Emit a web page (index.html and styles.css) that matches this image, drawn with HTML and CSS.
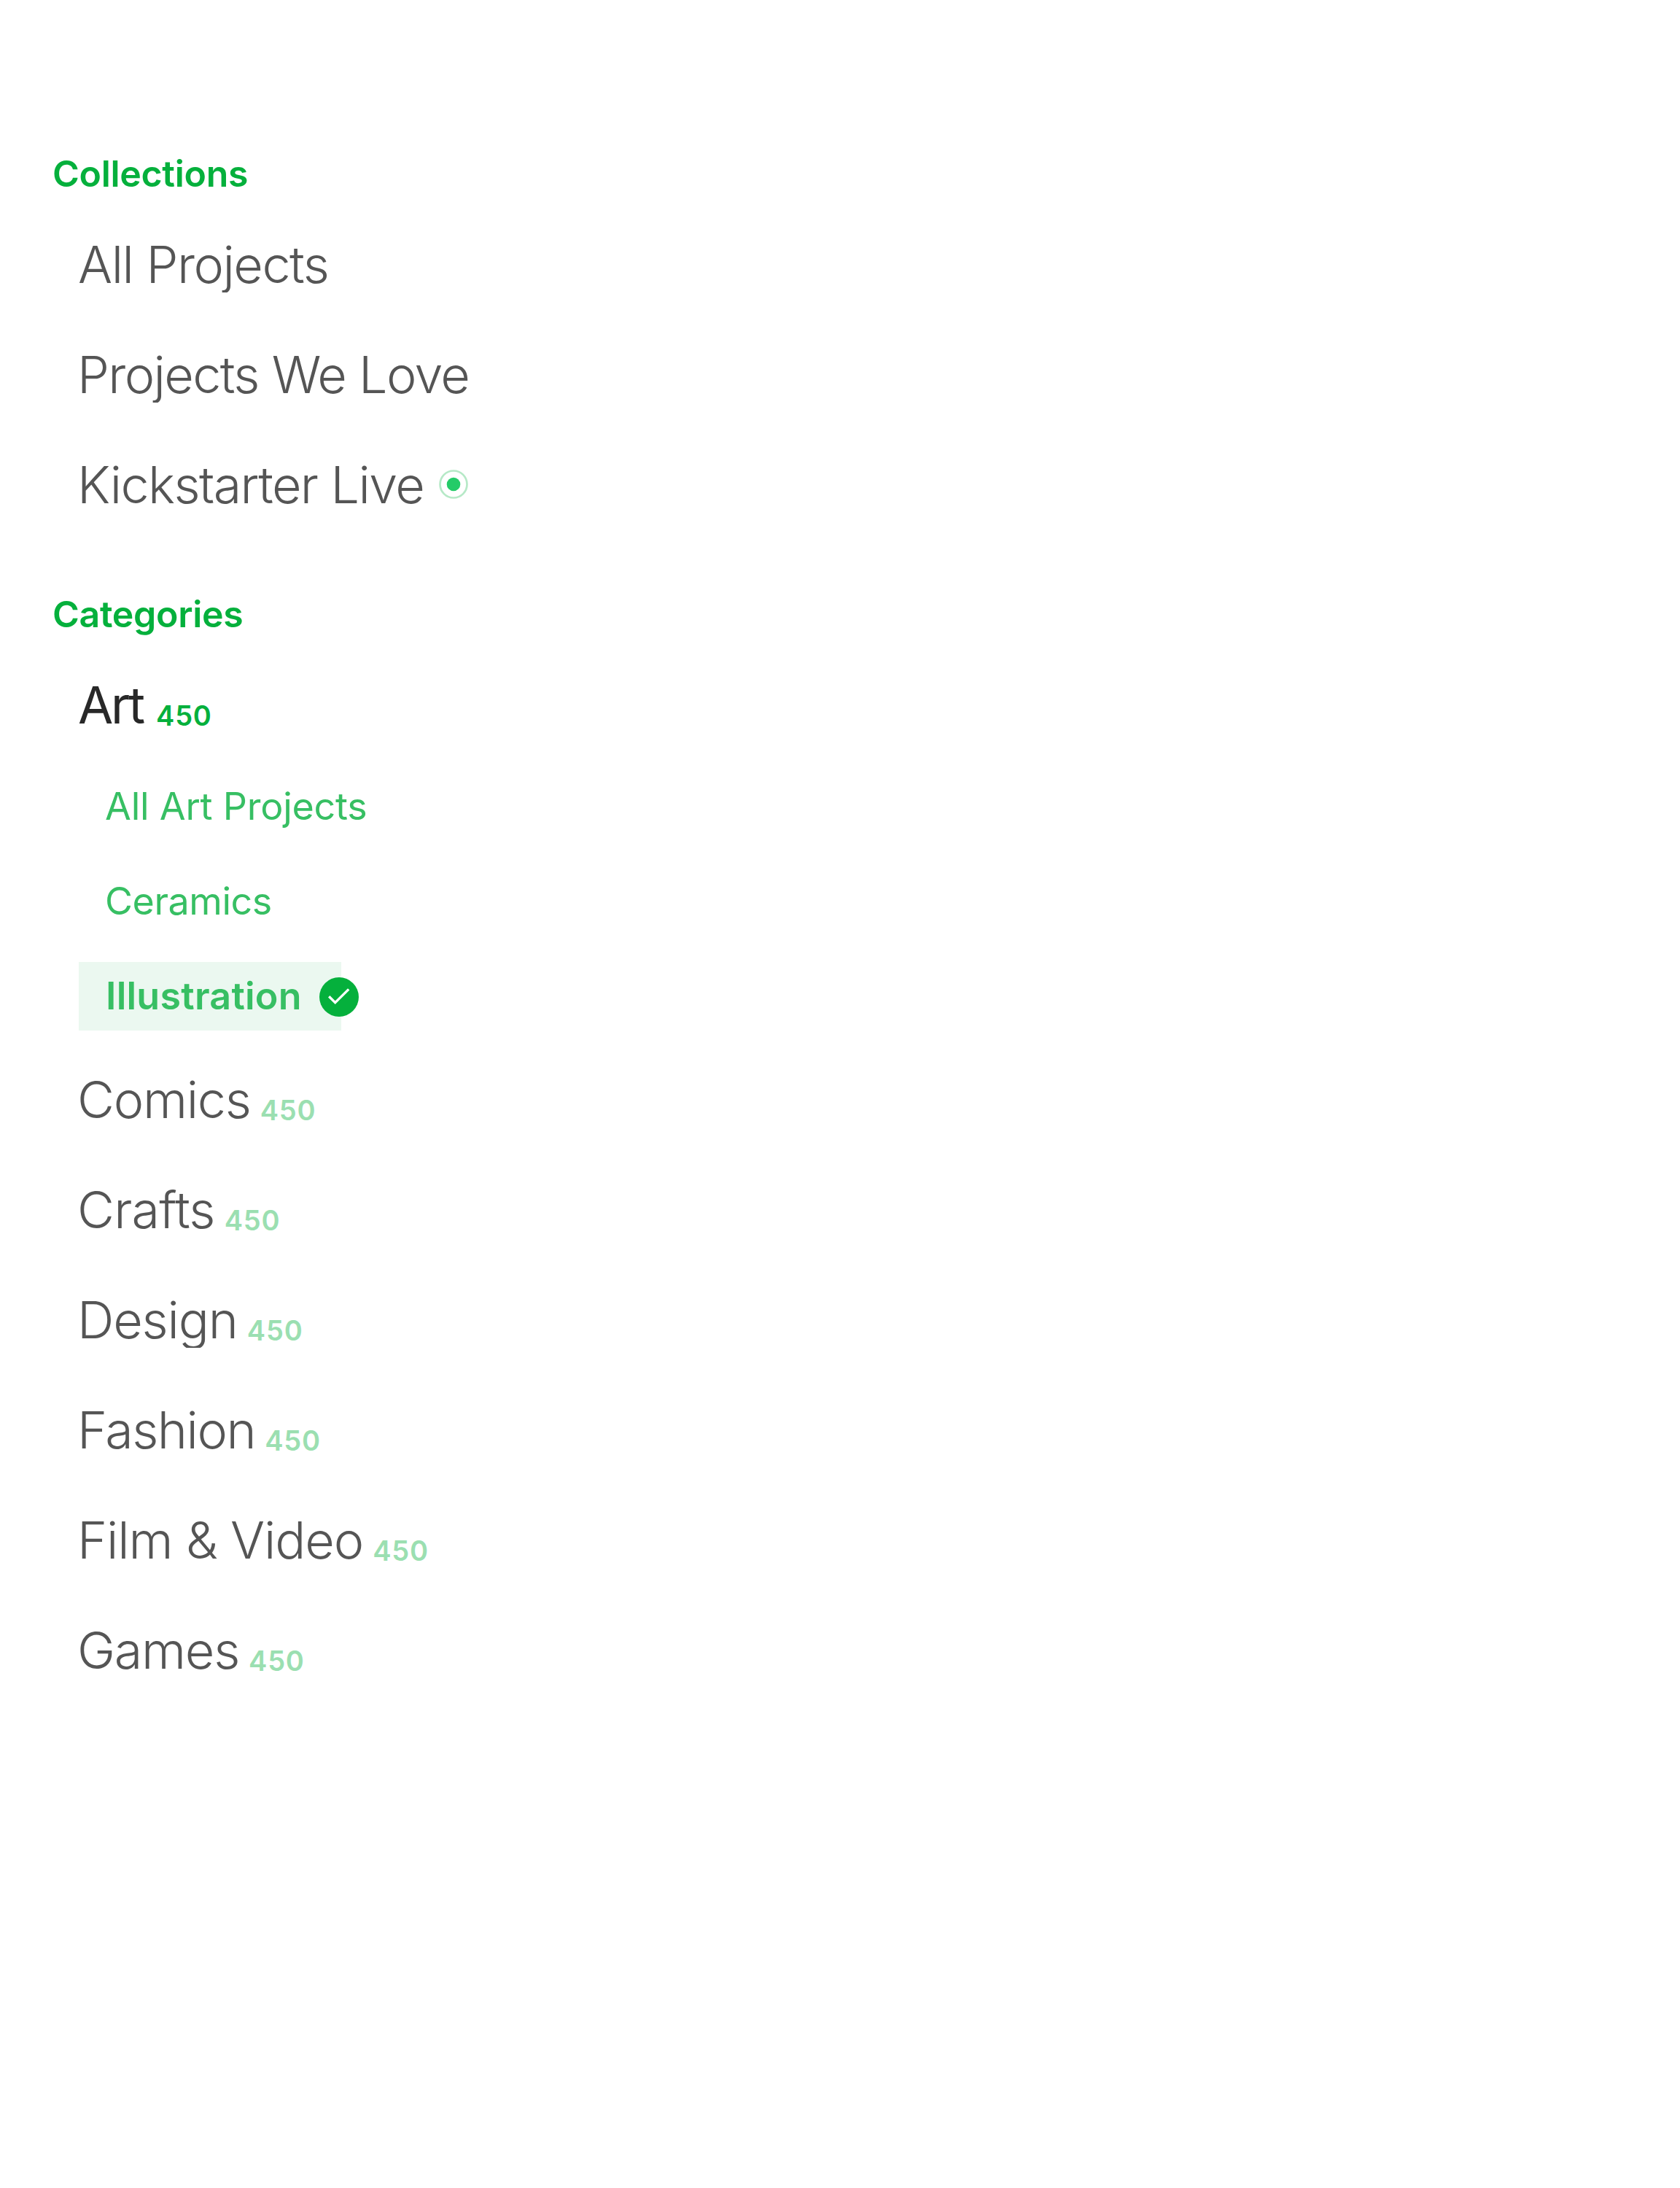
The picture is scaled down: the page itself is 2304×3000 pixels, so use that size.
FILE: index.html
```
<!DOCTYPE html>
<html lang="en">
<head>
<meta charset="utf-8">
<title>Discover filters</title>
<link rel="stylesheet" href="styles.css">
</head>
<body>
<nav class="filters">
  <section class="group">
    <h2 class="heading">Collections</h2>
    <ul class="list">
      <li class="row"><span class="label label--all">All Projects</span></li>
      <li class="row"><span class="label label--love">Projects We Love</span></li>
      <li class="row">
        <span class="label label--live">Kickstarter Live</span>
        <svg class="live" viewBox="0 0 40 40" aria-hidden="true">
          <circle cx="20" cy="20" r="18.5" fill="none" stroke="#b6e9c7" stroke-width="2.7"/>
          <circle cx="20" cy="20" r="9.3" fill="#25cb68"/>
        </svg>
      </li>
    </ul>
  </section>
  <section class="group">
    <h2 class="heading">Categories</h2>
    <ul class="list">
      <li class="row row--open"><span class="label label--art">Art</span><span class="count">450</span></li>
      <li>
        <ul class="sublist">
          <li class="subrow"><span class="sub sub--all">All Art Projects</span></li>
          <li class="subrow"><span class="sub sub--ceramics">Ceramics</span></li>
          <li class="subrow">
            <div class="selected">
              <span class="sub sub--active">Illustration</span>
              <svg class="check" viewBox="0 0 54 54" aria-hidden="true">
                <circle cx="27" cy="27" r="27" fill="#05b03c"/>
                <path d="M13.2 26.2 L21.7 34.6 L40.2 16.4" fill="none" stroke="#fff" stroke-width="3.4"/>
              </svg>
            </div>
          </li>
        </ul>
      </li>
      <li class="row"><span class="label label--comics">Comics</span><span class="count">450</span></li>
      <li class="row"><span class="label label--crafts">Crafts</span><span class="count">450</span></li>
      <li class="row"><span class="label label--design">Design</span><span class="count">450</span></li>
      <li class="row"><span class="label label--fashion">Fashion</span><span class="count">450</span></li>
      <li class="row"><span class="label label--film">Film &amp; Video</span><span class="count">450</span></li>
      <li class="row"><span class="label label--games">Games</span><span class="count">450</span></li>
    </ul>
  </section>
</nav>
</body>
</html>
```
FILE: styles.css
```
* { box-sizing: border-box; }

body {
  margin: 0;
  background: #fff;
  font-family: Inter, "Liberation Sans", sans-serif;
}

.filters {
  display: flex;
  flex-direction: column;
  gap: 62px;
  min-height: 3000px;
  padding-top: 198px;
}

ul {
  margin: 0;
  padding: 0;
  list-style: none;
}

.heading {
  margin: 0 0 9px;
  padding-left: 72px;
  font-size: 50px;
  font-weight: 600;
  line-height: 80px;
  letter-spacing: -0.3px;
  color: #05b03c;
}

.row {
  display: flex;
  align-items: flex-start;
  gap: 13px;
  height: 151px;
  padding: 33px 0 0 106px;
}

/* Labels are cut just under the baseline, trimming long descenders */
.label {
  font-size: 70px;
  font-weight: 310;
  line-height: 85px;
  white-space: nowrap;
  color: #555;
  clip-path: inset(0 -8px 4px -8px);
}

.label--all { margin-left: 1px; letter-spacing: -1.5px; }
.label--love { letter-spacing: -1.65px; }
.label--live { letter-spacing: -1.6px; }
.label--comics { letter-spacing: -1.25px; }
.label--crafts { letter-spacing: -0.8px; }
.label--design { letter-spacing: -1.15px; }
.label--fashion { letter-spacing: -1.45px; }
.label--film { letter-spacing: -1.13px; }
.label--games { letter-spacing: -1.25px; }

.label--art {
  margin-right: 5px;
  font-weight: 400;
  letter-spacing: -3.2px;
  color: #282828;
}

.row--open { padding-left: 107px; }

.count {
  margin-top: 34px;
  font-size: 38px;
  font-weight: 600;
  line-height: 46px;
  letter-spacing: 0.8px;
  color: #9bdfb1;
}

.row--open .count { color: #05b03c; }

.live {
  width: 40px;
  height: 40px;
  margin: 22px 0 0 8px;
}

.sublist {
  margin: -1px 0 1px;
  padding-left: 108px;
}

.subrow {
  display: flex;
  align-items: center;
  height: 130px;
}

.sub {
  padding-left: 36px;
  font-size: 52px;
  line-height: 64px;
  white-space: nowrap;
  color: #37bf63;
}

.sub--all { letter-spacing: -0.23px; }
.sub--ceramics { letter-spacing: -0.45px; }

.sub--active {
  padding-left: 37px;
  font-weight: 600;
  letter-spacing: 0.25px;
}

.selected {
  display: flex;
  align-items: center;
  justify-content: space-between;
  width: 360px;
  height: 94px;
  background: #ebf8f0;
}

.check {
  flex: none;
  width: 54px;
  height: 54px;
  margin: 2px -24px 0 0;
}
```
